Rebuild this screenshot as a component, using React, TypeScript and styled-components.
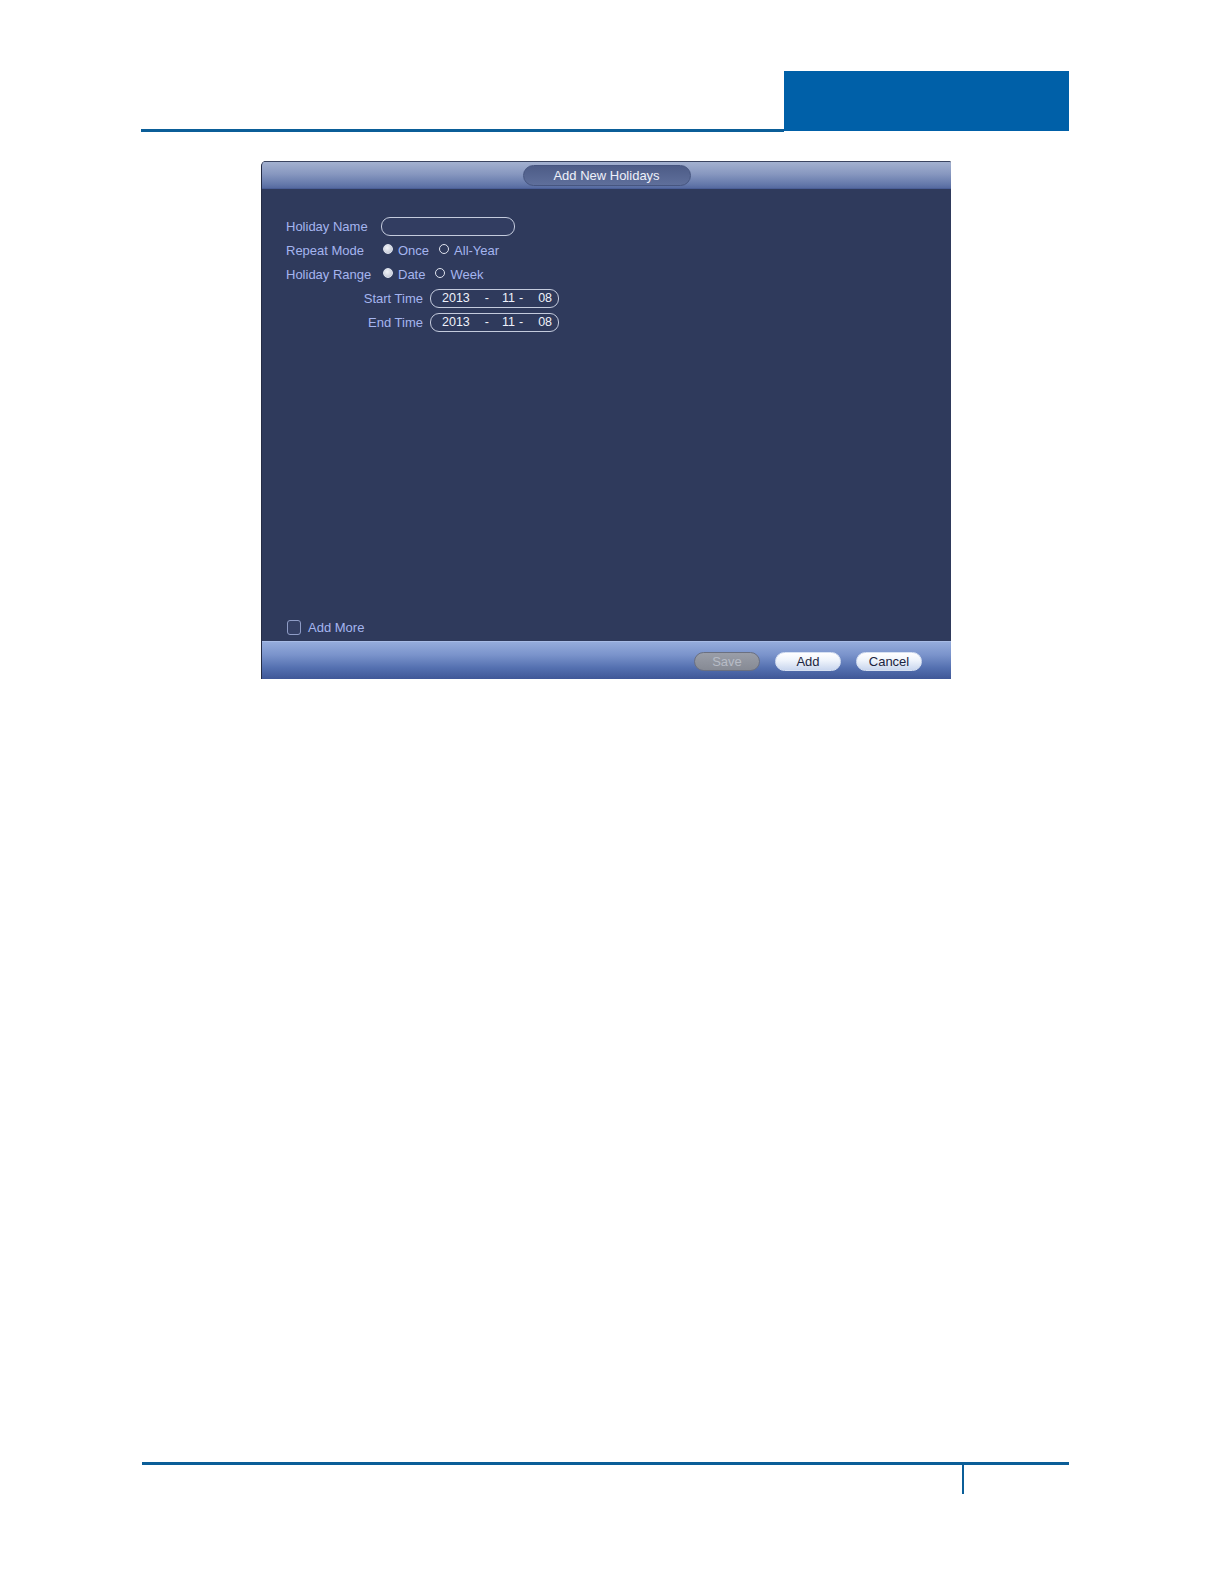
import React from 'react'
import styled, {createGlobalStyle} from 'styled-components'

const GlobalStyle = createGlobalStyle`
    body {
        margin: 0;
        background: #ffffff;
        font-family: "Liberation Sans", Arial, sans-serif;
    }
`

const Page = styled.div`
    width: 1224px;
    height: 1584px;
    display: flex;
    flex-direction: column;
    box-sizing: border-box;
    padding-top: 71px;
`

const Header = styled.div`
    display: flex;
    align-items: flex-end;
    margin-left: 141px;
    width: 928px;
    height: 60px;
`

const HeaderRule = styled.div`
    flex: 1;
    border-bottom: 3px solid #0b5e98;
    margin-bottom: -1px;
`

const HeaderTab = styled.div`
    width: 285px;
    height: 60px;
    background: #0060a8;
`

const Dialog = styled.div`
    margin-top: 30px;
    margin-left: 261px;
    width: 689px;
    height: 518px;
    display: flex;
    flex-direction: column;
    border-left: 1px solid #252c45;
    border-top-left-radius: 5px;
    border-top-right-radius: 2px;
    overflow: hidden;
    background: #2f3a5c;
`

const TitleBar = styled.div`
    height: 28px;
    flex-shrink: 0;
    display: flex;
    align-items: center;
    justify-content: center;
    background: linear-gradient(#a3b1d0 0%, #8898c0 45%, #6579ab 85%, #566aa0 100%);
    border-top: 1px solid #3a4460;
    box-sizing: border-box;
    border-bottom: 1px solid #4a5e96;
`

const TitlePill = styled.div`
    width: 168px;
    height: 21px;
    border-radius: 11px;
    display: flex;
    align-items: center;
    justify-content: center;
    box-sizing: border-box;
    border: 1px solid #46557f;
    background: linear-gradient(#4d5c87, #5f6f9b);
    color: #eef1fa;
    font-size: 13px;
    margin-top: 1px;
`

const Body = styled.div`
    flex: 1;
    display: flex;
    flex-direction: column;
    padding: 25px 0 4px 24px;
`

const Row = styled.div`
    display: flex;
    align-items: center;
    height: 24px;
`

const Label = styled.div<{$width: number; $right?: boolean}>`
    width: ${p => p.$width}px;
    flex-shrink: 0;
    color: #a5b5ef;
    font-size: 13px;
    text-align: ${p => (p.$right ? 'right' : 'left')};
    margin-right: ${p => (p.$right ? 7 : 0)}px;
`

const TextBox = styled.div`
    width: 134px;
    height: 19px;
    box-sizing: border-box;
    border: 1px solid #c4cbdd;
    border-radius: 9px;
    background: #323d61;
`

const Radio = styled.span<{$on?: boolean}>`
    width: 10px;
    height: 10px;
    box-sizing: border-box;
    border-radius: 50%;
    border: 1px solid #dfe3ee;
    background: ${p => (p.$on ? 'radial-gradient(circle at 40% 35%, #f2f4f8, #b9bfcf)' : 'transparent')};
    margin-right: 5px;
    margin-bottom: 2px;
`

const Option = styled.label<{$gap?: number}>`
    display: flex;
    align-items: center;
    color: #a5b5ef;
    font-size: 13px;
    margin-right: ${p => p.$gap ?? 0}px;
`

const DateBox = styled.div`
    width: 129px;
    height: 19px;
    box-sizing: border-box;
    border: 1px solid #c4cbdd;
    border-radius: 9px;
    display: flex;
    align-items: center;
    padding-left: 11px;
    color: #eef1fa;
    font-size: 12.5px;
`

const Segment = styled.span<{$offset: number}>`
    margin-left: ${p => p.$offset}px;
`

const BottomRow = styled.div`
    margin-top: auto;
    display: flex;
    align-items: center;
    height: 20px;
`

const CheckBox = styled.span`
    width: 14px;
    height: 15px;
    box-sizing: border-box;
    border: 1px solid #8f9cc6;
    border-radius: 3px;
    background: #354065;
    margin-left: 1px;
    margin-right: 7px;
`

const ButtonBar = styled.div`
    height: 38px;
    flex-shrink: 0;
    display: flex;
    align-items: center;
    justify-content: flex-end;
    gap: 15px;
    padding-right: 29px;
    background: linear-gradient(#95acdc 0%, #7a93cb 35%, #5470b0 70%, #3f5797 100%);
    border-top: 1px solid #a8bce6;
    box-sizing: border-box;
`

const Button = styled.button<{$disabled?: boolean}>`
    width: 66px;
    height: 19px;
    border-radius: 10px;
    padding: 0;
    margin-top: 1px;
    font-family: "Liberation Sans", Arial, sans-serif;
    font-size: 13px;
    border: 1px solid ${p => (p.$disabled ? '#6b7080' : '#d6e0f2')};
    color: ${p => (p.$disabled ? '#b7bcc6' : '#1b2440')};
    background: ${p =>
        p.$disabled
            ? 'linear-gradient(#9a9ea8, #868a94)'
            : 'linear-gradient(#ffffff 0%, #eef3fb 45%, #c9d6ee 100%)'};
`

const Footer = styled.div`
    margin-top: 783px;
    margin-left: 142px;
    width: 927px;
    border-top: 3px solid #0b5e98;
`

const PageMark = styled.div`
    margin-left: 820px;
    width: 2px;
    height: 29px;
    background: #0b5e98;
`

const DateField = ({year, month, day}: {year: string; month: string; day: string}) => (
    <DateBox>
        <Segment $offset={0}>{year}</Segment>
        <Segment $offset={15}>-</Segment>
        <Segment $offset={13}>{month}</Segment>
        <Segment $offset={4}>-</Segment>
        <Segment $offset={15}>{day}</Segment>
    </DateBox>
)

export default function App() {
    return (
        <>
            <GlobalStyle />
            <Page>
                <Header>
                    <HeaderRule />
                    <HeaderTab />
                </Header>

                <Dialog>
                    <TitleBar>
                        <TitlePill>Add New Holidays</TitlePill>
                    </TitleBar>

                    <Body>
                        <Row>
                            <Label $width={95}>Holiday Name</Label>
                            <TextBox />
                        </Row>
                        <Row>
                            <Label $width={97}>Repeat Mode</Label>
                            <Option $gap={10}>
                                <Radio $on />
                                Once
                            </Option>
                            <Option>
                                <Radio />
                                All-Year
                            </Option>
                        </Row>
                        <Row>
                            <Label $width={97}>Holiday Range</Label>
                            <Option $gap={10}>
                                <Radio $on />
                                Date
                            </Option>
                            <Option>
                                <Radio />
                                Week
                            </Option>
                        </Row>
                        <Row>
                            <Label $width={137} $right>
                                Start Time
                            </Label>
                            <DateField year="2013" month="11" day="08" />
                        </Row>
                        <Row>
                            <Label $width={137} $right>
                                End Time
                            </Label>
                            <DateField year="2013" month="11" day="08" />
                        </Row>

                        <BottomRow>
                            <CheckBox />
                            <Option>Add More</Option>
                        </BottomRow>
                    </Body>

                    <ButtonBar>
                        <Button $disabled>Save</Button>
                        <Button>Add</Button>
                        <Button>Cancel</Button>
                    </ButtonBar>
                </Dialog>

                <Footer>
                    <PageMark />
                </Footer>
            </Page>
        </>
    )
}
